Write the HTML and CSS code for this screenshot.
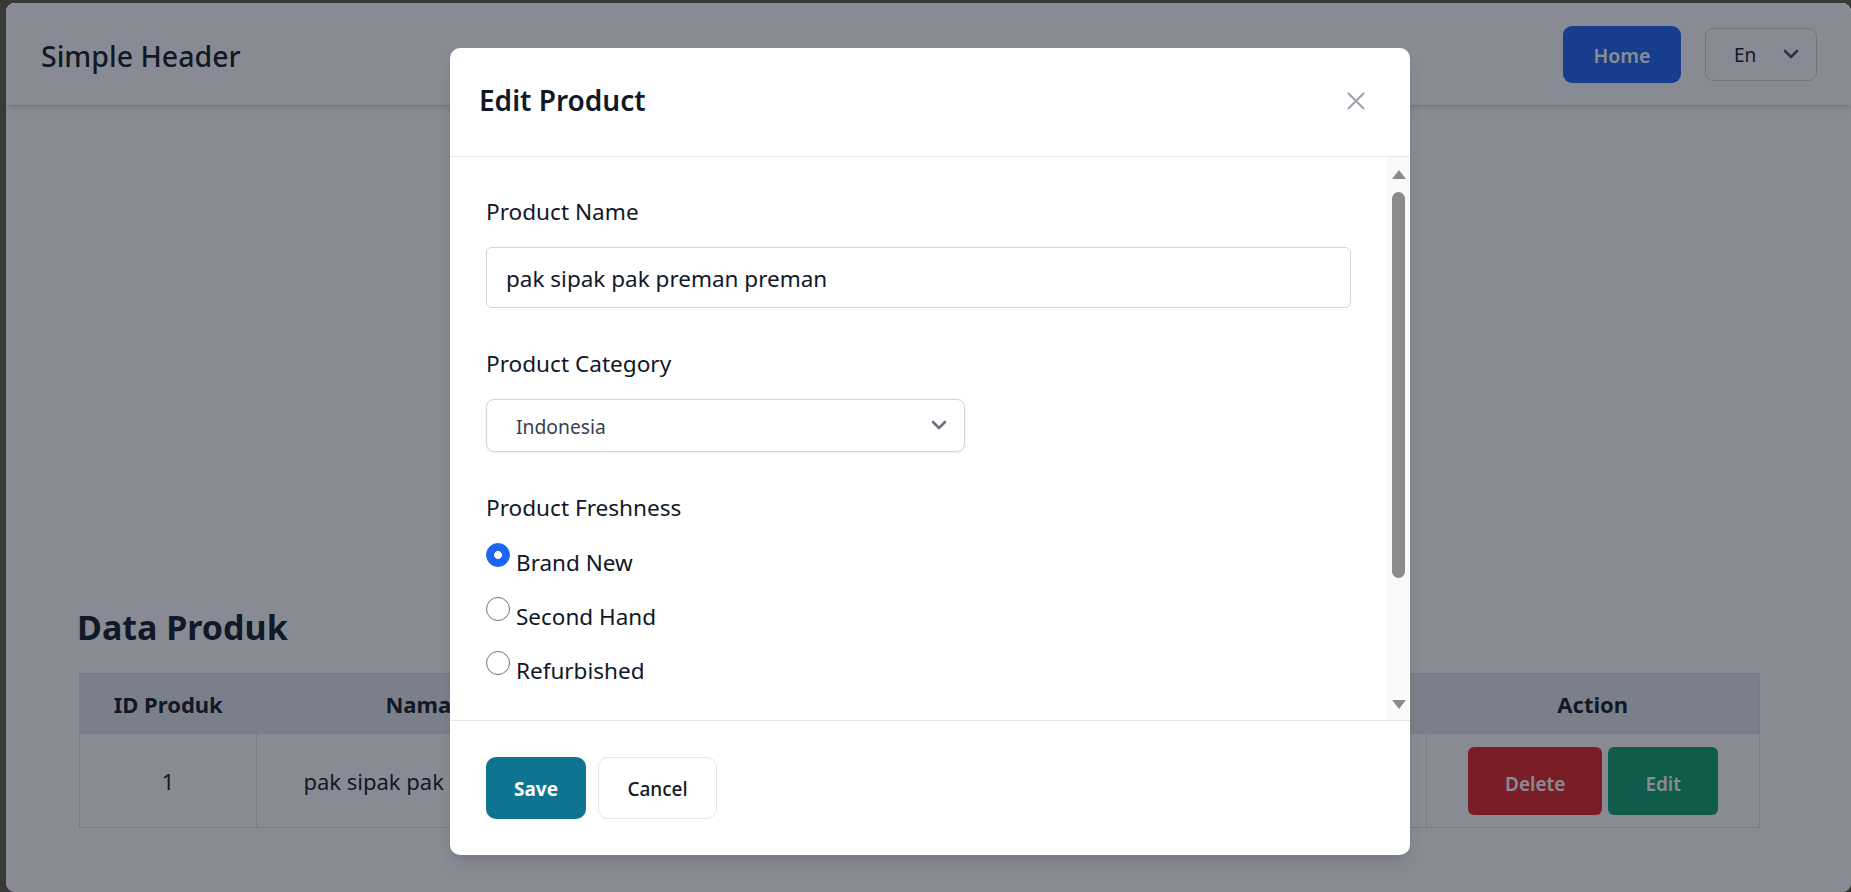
FILE: index.html
```html
<!DOCTYPE html>
<html lang="en">
<head>
<meta charset="utf-8">
<title>Simple Header</title>
<link rel="stylesheet" href="styles.css">
</head>
<body>
<div class="window">
  <div class="page">
    <header class="topbar">
      <div class="brand">Simple Header</div>
      <nav class="nav">
        <button class="btn-home" type="button">Home</button>
        <div class="lang">
          <span>En</span>
          <svg class="lang-chev" width="16" height="10" viewBox="0 0 16 10"><path d="M2 2l6 6 6-6" fill="none" stroke="#4b5563" stroke-width="2.6" stroke-linecap="round" stroke-linejoin="round"/></svg>
        </div>
      </nav>
    </header>

    <main class="content">
      <h1 class="title">Data Produk</h1>
      <table class="table">
        <colgroup>
          <col class="c1"><col class="c2"><col class="c3"><col class="c4"><col class="c5">
        </colgroup>
        <thead>
          <tr><th>ID Produk</th><th>Nama Produk</th><th>Kategori Produk</th><th>Kesegaran Produk</th><th>Action</th></tr>
        </thead>
        <tbody>
          <tr>
            <td>1</td>
            <td>pak sipak pak preman preman</td>
            <td>Indonesia</td>
            <td>Brand New</td>
            <td>
              <div class="actions">
                <button class="btn-delete" type="button">Delete</button>
                <button class="btn-edit" type="button">Edit</button>
              </div>
            </td>
          </tr>
        </tbody>
      </table>
    </main>

    <div class="backdrop">
      <div class="modal">
        <div class="modal-head">
          <h3 class="modal-title">Edit Product</h3>
          <button class="close" type="button" aria-label="Close">
            <svg width="18" height="18" viewBox="0 0 18 18"><path d="M1.5 1.5l15 15M16.5 1.5l-15 15" stroke="#9ca3af" stroke-width="2" stroke-linecap="round"/></svg>
          </button>
        </div>
        <div class="modal-body">
          <form class="form">
            <div class="field">
              <label class="label">Product Name</label>
              <input class="input" type="text" value="pak sipak pak preman preman">
            </div>
            <div class="field">
              <label class="label">Product Category</label>
              <div class="select">
                <span>Indonesia</span>
                <svg width="16" height="10" viewBox="0 0 16 10"><path d="M2 2l6 6 6-6" fill="none" stroke="#6b7280" stroke-width="2.6" stroke-linecap="round" stroke-linejoin="round"/></svg>
              </div>
            </div>
            <div class="field">
              <label class="label">Product Freshness</label>
              <div class="radios">
                <label class="radio-row"><input class="radio" type="radio" name="fresh" checked><span class="radio-text">Brand New</span></label>
                <label class="radio-row"><input class="radio" type="radio" name="fresh"><span class="radio-text">Second Hand</span></label>
                <label class="radio-row"><input class="radio" type="radio" name="fresh"><span class="radio-text">Refurbished</span></label>
              </div>
            </div>
            <div class="field">
              <label class="label">Image of Product</label>
              <input class="input" type="text" value="">
            </div>
            <div class="field">
              <label class="label">Product Price</label>
              <input class="input" type="text" value="">
            </div>
          </form>
          <div class="scrollbar">
            <span class="arrow-up"></span>
            <span class="thumb"></span>
            <span class="arrow-down"></span>
          </div>
        </div>
        <div class="modal-foot">
          <button class="btn-save" type="button">Save</button>
          <button class="btn-cancel" type="button">Cancel</button>
        </div>
      </div>
    </div>
  </div>
</div>
</body>
</html>
```

FILE: styles.css
```css
html, body {
  margin: 0;
  padding: 0;
}

body {
  background: #393939;
  font-family: "Noto Sans", "DejaVu Sans", sans-serif;
  color: #111827;
  overflow: hidden;
}

button, input {
  font-family: inherit;
}

.window {
  box-sizing: border-box;
  height: 892px;
  padding: 3px 0 0 6px;
}

.page {
  position: relative;
  height: 889px;
  background: #ffffff;
  border-radius: 9px;
  overflow: hidden;
}

/* ---------- top bar ---------- */
.topbar {
  box-sizing: border-box;
  height: 102px;
  display: flex;
  align-items: center;
  justify-content: space-between;
  padding: 0 34px 0 35px;
  background: #ffffff;
  box-shadow: 0 4px 6px -1px rgba(0, 0, 0, 0.12), 0 2px 4px -2px rgba(0, 0, 0, 0.1);
}

.brand {
  font-size: 28.5px;
  line-height: 36px;
  font-weight: 500;
  color: #111827;
  padding-top: 3px;
}

.nav {
  display: flex;
  align-items: center;
  gap: 24px;
}

.btn-home {
  width: 118px;
  height: 57px;
  border: 0;
  border-radius: 9px;
  background: #1c64f2;
  color: #ffffff;
  font-size: 19.5px;
  font-weight: 600;
  margin-top: 1px;
  padding: 2px 0 0;
}

.lang {
  box-sizing: border-box;
  width: 112px;
  height: 53px;
  display: flex;
  align-items: center;
  justify-content: space-between;
  padding: 2px 17px 0 28px;
  border: 1px solid #d1d5db;
  border-radius: 8px;
  font-size: 19px;
  color: #111827;
}

.lang-chev {
  margin-top: -2px;
}

/* ---------- page content ---------- */
.content {
  padding: 502px 0 0 73px;
}

.title {
  margin: 0 0 26px -2px;
  font-size: 34px;
  line-height: 40px;
  font-weight: 700;
  color: #111827;
}

.table {
  width: 1680px;
  border-collapse: collapse;
  table-layout: fixed;
  border: 1px solid #dcdfe4;
  font-size: 22px;
  color: #111827;
}

.c1 { width: 177px; }
.c2 { width: 408px; }
.c3 { width: 381px; }
.c4 { width: 381px; }
.c5 { width: 333px; }

.table th {
  height: 59px;
  background: #e5e7eb;
  font-weight: 700;
  text-align: center;
  padding: 0;
}

.table td {
  height: 93px;
  border: 1px solid #dcdfe4;
  text-align: center;
  padding: 0;
}

.actions {
  display: flex;
  justify-content: center;
  gap: 6px;
}

.btn-delete, .btn-edit {
  height: 68px;
  padding: 6px 37px 0;
  border: 0;
  border-radius: 6px;
  color: #ffffff;
  font-size: 19px;
  font-weight: 600;
}

.btn-delete { background: #e02424; }
.btn-edit { background: #0c9f70; }

/* ---------- modal ---------- */
.backdrop {
  position: absolute;
  inset: 0;
  background: rgba(17, 24, 39, 0.5);
  display: flex;
  justify-content: center;
  align-items: flex-start;
  padding: 45px 0 0 3px;
}

.modal {
  width: 960px;
  height: 807px;
  background: #ffffff;
  border-radius: 10px;
  display: flex;
  flex-direction: column;
  box-shadow: 0 10px 15px -3px rgba(0, 0, 0, 0.1), 0 4px 6px -4px rgba(0, 0, 0, 0.1);
  overflow: hidden;
}

.modal-head {
  box-sizing: border-box;
  height: 109px;
  flex: none;
  display: flex;
  align-items: center;
  justify-content: space-between;
  padding: 0 32px 0 29px;
  border-bottom: 1px solid #e5e7eb;
}

.modal-title {
  margin: 0;
  font-size: 28px;
  line-height: 36px;
  font-weight: 600;
  color: #111827;
  padding-bottom: 4px;
}

.close {
  width: 44px;
  height: 44px;
  border: 0;
  background: transparent;
  display: flex;
  align-items: center;
  justify-content: center;
  padding: 0 0 2px;
}

.modal-body {
  height: 563px;
  flex: none;
  display: flex;
}

.form {
  flex: 1;
  padding: 40px 36px 0 36px;
  overflow: hidden;
}

.field {
  margin-bottom: 41.5px;
}

.label {
  display: block;
  font-size: 22.6px;
  line-height: 30px;
  color: #111827;
  margin-bottom: 19.5px;
}

.input {
  box-sizing: border-box;
  display: block;
  width: 100%;
  height: 61px;
  padding: 2px 19px 0;
  border: 1px solid #d1d5db;
  border-radius: 6px;
  font-size: 22.5px;
  color: #111827;
  background: #ffffff;
  outline: none;
}

.select {
  box-sizing: border-box;
  width: 479px;
  height: 53px;
  display: flex;
  align-items: center;
  justify-content: space-between;
  padding: 2px 17px 0 29px;
  border: 1px solid #d1d5db;
  border-radius: 8px;
  box-shadow: 0 1px 2px rgba(0, 0, 0, 0.08);
  font-size: 19.3px;
  color: #374151;
}

.select svg {
  margin-top: -3px;
}

.radios {
  display: flex;
  flex-direction: column;
  gap: 19px;
}

.radio-row {
  display: flex;
  align-items: flex-start;
  gap: 6px;
}

.radio {
  appearance: none;
  -webkit-appearance: none;
  box-sizing: border-box;
  width: 24px;
  height: 24px;
  margin: 0;
  border: 1px solid #6b7280;
  border-radius: 50%;
  background: #ffffff;
}

.radio:checked {
  border-color: #1c64f2;
  background: radial-gradient(circle, #ffffff 0 3.6px, #1c64f2 4.3px);
}

.radio-text {
  margin-top: 5px;
  font-size: 22.5px;
  line-height: 30px;
  color: #111827;
}

.scrollbar {
  width: 23px;
  flex: none;
  background: #fafafa;
  display: flex;
  flex-direction: column;
  align-items: center;
  padding: 13px 0 11px;
  box-sizing: border-box;
}

.arrow-up, .arrow-down {
  width: 0;
  height: 0;
  border-left: 7px solid transparent;
  border-right: 7px solid transparent;
}

.arrow-up {
  border-bottom: 9px solid #8b8b8b;
}

.arrow-down {
  margin-top: auto;
  border-top: 9px solid #8b8b8b;
}

.thumb {
  width: 13px;
  height: 386px;
  margin-top: 13px;
  border-radius: 7px;
  background: #8b8b8b;
}

.modal-foot {
  box-sizing: border-box;
  flex: none;
  height: 135px;
  border-top: 1px solid #e5e7eb;
  display: flex;
  align-items: center;
  gap: 12px;
  padding: 0 36px;
}

.btn-save {
  width: 100px;
  height: 62px;
  border: 0;
  border-radius: 10px;
  background: #0e7490;
  color: #ffffff;
  font-size: 19px;
  font-weight: 700;
  padding: 2px 0 0;
}

.btn-cancel {
  width: 119px;
  height: 62px;
  border: 1px solid #e5e7eb;
  border-radius: 10px;
  background: #ffffff;
  color: #111827;
  font-size: 19px;
  font-weight: 500;
  padding: 2px 0 0;
}
```
